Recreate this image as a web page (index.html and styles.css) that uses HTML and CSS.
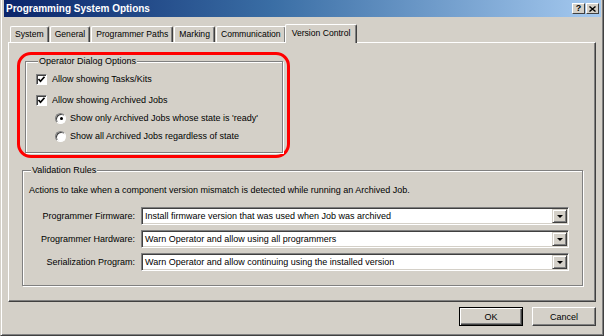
FILE: index.html
```html
<!DOCTYPE html>
<html>
<head>
<title>Programming System Options</title>
<link rel="stylesheet" href="styles.css">
</head>
<body>
<div class="window">
	<div class="titlebar">
		<span class="title">Programming System Options</span>
		<div class="caption_buttons">
			<span class="cap_btn">?</span>
			<span class="cap_btn">
				<svg width="7" height="6" viewBox="0 0 7 6"><path d="M0.5 0.5 L6.5 5.5 M6.5 0.5 L0.5 5.5" stroke="#000" stroke-width="1.4"/></svg>
			</span>
		</div>
	</div>
	<div class="client">
		<div class="tabs">
			<span class="tab">System</span>
			<span class="tab">General</span>
			<span class="tab">Programmer Paths</span>
			<span class="tab">Marking</span>
			<span class="tab">Communication</span>
			<span class="tab active">Version Control</span>
		</div>
		<div class="panel">
			<div class="highlight">
				<fieldset class="group operator">
					<legend>Operator Dialog Options</legend>
					<div class="option">
						<span class="checkbox"><svg width="9" height="9" viewBox="0 0 9 9"><path d="M1.5 4 L3.5 6.2 L7.5 1.8" fill="none" stroke="#000" stroke-width="1.7"/></svg></span>
						Allow showing Tasks/Kits
					</div>
					<div class="option second">
						<span class="checkbox"><svg width="9" height="9" viewBox="0 0 9 9"><path d="M1.5 4 L3.5 6.2 L7.5 1.8" fill="none" stroke="#000" stroke-width="1.7"/></svg></span>
						Allow showing Archived Jobs
					</div>
					<div class="option sub">
						<span class="radio checked"></span>
						Show only Archived Jobs whose state is 'ready'
					</div>
					<div class="option sub">
						<span class="radio"></span>
						Show all Archived Jobs regardless of state
					</div>
				</fieldset>
			</div>
			<fieldset class="group validation">
				<legend>Validation Rules</legend>
				<p class="hint">Actions to take when a component version mismatch is detected while running an Archived Job.</p>
				<div class="rules">
					<label>Programmer Firmware:</label>
					<div class="combo"><span class="value">Install firmware version that was used when Job was archived</span><span class="drop"><i></i></span></div>
					<label>Programmer Hardware:</label>
					<div class="combo"><span class="value">Warn Operator and allow using all programmers</span><span class="drop"><i></i></span></div>
					<label>Serialization Program:</label>
					<div class="combo"><span class="value">Warn Operator and allow continuing using the installed version</span><span class="drop"><i></i></span></div>
				</div>
			</fieldset>
		</div>
		<div class="buttons">
			<button class="btn default">OK</button>
			<button class="btn">Cancel</button>
		</div>
	</div>
</div>
</body>
</html>
```

FILE: styles.css
```css
body{
	margin:0;
	background:#d4d0c8;
	font-family:"Liberation Sans", Arial, sans-serif;
	font-size:9px;
	color:#000;
}
.window{
	width:604px;
	height:336px;
	box-sizing:border-box;
	padding:0 2px 0 3px;
	border-left:1px solid #d4d0c8;
	border-right:1px solid #404040;
	border-bottom:1px solid #404040;
	box-shadow:inset 1px 0 0 #fff, inset -1px -1px 0 #808080;
	background:#d4d0c8;
}
.titlebar{
	height:17px;
	display:flex;
	align-items:center;
	justify-content:space-between;
	padding:0 2px 0 2px;
	background:linear-gradient(to right, #0a246a, #3a6ea5 45%, #a6caf0);
}
.title{
	color:#fff;
	font-weight:bold;
	font-size:10px;
}
.caption_buttons{
	display:flex;
	gap:1px;
}
.cap_btn{
	width:13px;
	height:11px;
	box-sizing:border-box;
	display:flex;
	align-items:center;
	justify-content:center;
	background:#d4d0c8;
	border-top:1px solid #fff;
	border-left:1px solid #fff;
	border-right:1px solid #404040;
	border-bottom:1px solid #404040;
	font-weight:bold;
	font-size:9px;
	line-height:9px;
}
.client{
	padding:0 0 0 4px;
}
.tabs{
	height:25px;
	display:flex;
	align-items:flex-end;
	padding-left:2px;
	font-size:8.6px;
}
.tab{
	height:16px;
	box-sizing:border-box;
	padding:0 4px;
	margin-right:1px;
	line-height:15px;
	border-top:1px solid #fff;
	border-left:1px solid #fff;
	border-right:1px solid #404040;
	border-radius:2px 2px 0 0;
	box-shadow:inset -1px 0 0 #808080;
}
.tab.active{
	height:19px;
	margin:0 -2px -1px -2px;
	padding:0 6px 2px 6px;
	line-height:16px;
	background:#d4d0c8;
	position:relative;
	z-index:1;
}
.panel{
	width:588px;
	height:260px;
	box-sizing:border-box;
	border-top:1px solid #fff;
	border-left:1px solid #fff;
	border-right:1px solid #404040;
	border-bottom:1px solid #404040;
	box-shadow:inset -1px -1px 0 #808080;
	padding-top:9px;
}
.highlight{
	width:273px;
	height:106px;
	box-sizing:border-box;
	margin-left:8px;
	border:3px solid #f00;
	border-radius:14px;
	padding:1px 0 0 5px;
}
.group{
	margin:0;
	padding:0;
	border:1px solid #808080;
	box-shadow:inset 1px 1px 0 #fff, 1px 1px 0 #fff;
}
.group legend{
	padding:0 1px;
	margin-left:2px;
	line-height:11px;
	background:#d4d0c8;
}
.operator{
	width:258px;
	height:97px;
	box-sizing:border-box;
	padding:3px 0 0 10px;
}
.option{
	height:18px;
	display:flex;
	align-items:center;
	gap:5px;
}
.option.second{
	margin-top:3px;
}
.option.sub{
	padding-left:19px;
	gap:4px;
}
.checkbox{
	width:11px;
	height:11px;
	box-sizing:border-box;
	display:flex;
	align-items:center;
	justify-content:center;
	background:#fff;
	border-top:1px solid #808080;
	border-left:1px solid #808080;
	border-right:1px solid #fff;
	border-bottom:1px solid #fff;
	box-shadow:inset 1px 1px 0 #404040;
}
.radio{
	width:11px;
	height:11px;
	box-sizing:border-box;
	border-radius:50%;
	background:#fff;
	border:1px solid;
	border-color:#808080 #fff #fff #808080;
	box-shadow:inset 1px 1px 0 #404040;
	display:flex;
	align-items:center;
	justify-content:center;
}
.radio.checked::after{
	content:"";
	width:3px;
	height:3px;
	border-radius:50%;
	background:#000;
	margin:1px 0 0 1px;
}
.validation{
	width:561px;
	height:121px;
	box-sizing:border-box;
	margin:7px 0 0 13px;
	padding:9px 12px 0 6px;
}
.hint{
	margin:0;
	line-height:11px;
}
.rules{
	margin-top:11px;
	display:grid;
	grid-template-columns:106px 428px;
	column-gap:6px;
	row-gap:5px;
	align-items:center;
}
.rules label{
	text-align:right;
}
.combo{
	height:18px;
	box-sizing:border-box;
	display:flex;
	align-items:center;
	background:#fff;
	border-top:1px solid #808080;
	border-left:1px solid #808080;
	border-right:1px solid #fff;
	border-bottom:1px solid #fff;
	box-shadow:inset 1px 1px 0 #404040, inset -1px -1px 0 #d4d0c8;
	padding:1px 1px 1px 2px;
}
.combo .value{
	flex:1;
	padding-left:1px;
}
.drop{
	width:15px;
	height:14px;
	box-sizing:border-box;
	background:#d4d0c8;
	border-top:1px solid #d4d0c8;
	border-left:1px solid #d4d0c8;
	border-right:1px solid #404040;
	border-bottom:1px solid #404040;
	box-shadow:inset 1px 1px 0 #fff, inset -1px -1px 0 #808080;
	display:flex;
	align-items:center;
	justify-content:center;
}
.drop i{
	width:0;
	height:0;
	border-left:3px solid transparent;
	border-right:3px solid transparent;
	border-top:3px solid #000;
}
.buttons{
	width:588px;
	margin-top:5px;
	display:flex;
	justify-content:flex-end;
	gap:9px;
}
.btn{
	width:64px;
	height:19px;
	box-sizing:border-box;
	margin:0;
	padding:0;
	font-family:"Liberation Sans", Arial, sans-serif;
	font-size:9px;
	color:#000;
	background:#d4d0c8;
	border-top:1px solid #fff;
	border-left:1px solid #fff;
	border-right:1px solid #404040;
	border-bottom:1px solid #404040;
	box-shadow:inset -1px -1px 0 #808080;
}
.btn.default{
	border:1px solid #000;
	box-shadow:inset 1px 1px 0 #fff, inset -1px -1px 0 #404040, inset -2px -2px 0 #808080;
}
```
